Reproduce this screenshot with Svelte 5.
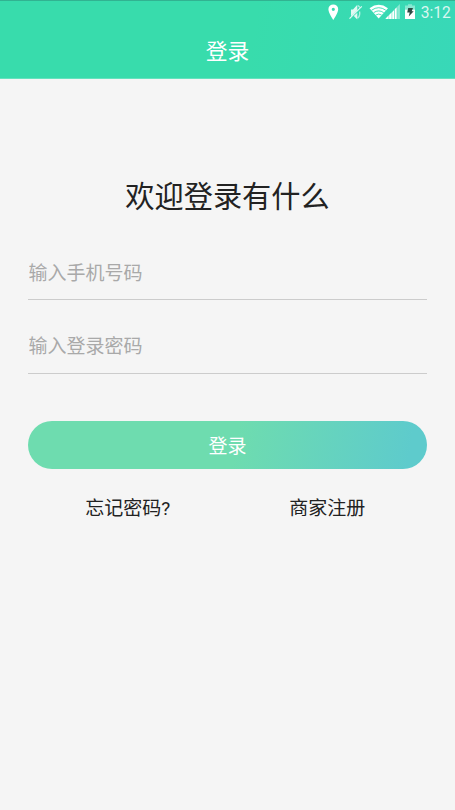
<script lang="ts">
  let phone = $state('');
  let password = $state('');
</script>

<div class="page">
  <header>
    <div class="status">
      <svg width="127" height="24" viewBox="328 0 127 24">
        <path fill="#fff" fill-rule="evenodd" d="M333.3 4.4a4.9 4.9 0 0 0-4.9 4.9c0 3.6 4.9 10.7 4.9 10.7s4.9-7.1 4.9-10.7a4.9 4.9 0 0 0-4.9-4.9zm0 3.3a1.6 1.6 0 1 1 0 3.2 1.6 1.6 0 0 1 0-3.2z" />
        <g opacity=".85">
          <path fill="#fff" d="M351 9.5h2l4.3-4.7v5.4L351 16.3zM353.8 16l3.5-3.2v6.8z" />
          <path fill="none" stroke="#fff" stroke-width="1.2" d="M349.5 18.7L361.8 6.4" />
          <path fill="none" stroke="#fff" stroke-width="1.4" opacity=".7" d="M357.8 5.7q1.7.8 2 2M359.6 11.5q.6 4.8-2 6.6" />
        </g>
        <path fill="#fff" d="M369.5 8.2Q378.7 1.5 388 8.2L378.7 18.6z" />
        <path fill="none" stroke="#38dcb0" stroke-width=".9" d="M371.6 10.2q7.1-5 14.2 0M373.7 12.6q5-3.4 10 0M375.8 15q2.9-1.9 5.8 0" />
        <path fill="#fff" d="M385.6 19v-.6l3.1-3.1V19zM389.1 19v-4.1l2.6-2.6V19zM392.2 19v-7.1l1.9-1.9v9zM394.7 19V9.3l2-2V19z" />
        <path fill="#fff" opacity=".42" d="M397.2 19V6.7l2.7-2.7v15z" />
        <path fill="#fff" opacity=".4" d="M405 5.6h3V4.2h4v1.4h3v4.4h-10z" />
        <path fill="#fff" d="M405 9.7h10V19h-10z" />
        <path fill="#2c4942" d="M408.2 8h4.8l-1.3 3.2h2l-5 5.4 1-4h-2.5z" />
        <text x="420.8" y="18">3:12</text>
      </svg>
    </div>
    <div class="title">登录</div>
  </header>
  <main>
    <h1>欢迎登录有什么</h1>
    <form onsubmit={(e) => e.preventDefault()}>
      <input type="tel" placeholder="输入手机号码" bind:value={phone} />
      <input class="password" type="password" placeholder="输入登录密码" bind:value={password} />
      <button type="submit">登录</button>
    </form>
    <nav>
      <span>忘记密码<span class="mark">?</span></span>
      <span>商家注册</span>
    </nav>
  </main>
</div>

<style>
  :global(body) {
    background: #f5f5f5;
  }
  .page {
    min-height: 810px;
    background: #f5f5f5;
    color: #222;
    font-family: "Noto Sans CJK SC", sans-serif;
  }
  header {
    box-sizing: border-box;
    height: 79px;
    border-top: 1px solid #31b391;
    border-bottom: 1px solid #65e2be;
    background: linear-gradient(100deg, #38dcac 55%, #38d8b8);
    color: #fff;
  }
  .status {
    display: flex;
    justify-content: flex-end;
    height: 24px;
    margin-top: -1px;
  }
  .status text {
    fill: #fff;
    fill-opacity: .82;
    font: 15.6px Roboto, sans-serif;
  }
  .title {
    font-size: 21.8px;
    line-height: 52px;
    text-align: center;
  }
  main {
    padding: 93px 28px 0;
  }
  h1 {
    margin: 0;
    font-size: 29.2px;
    font-weight: 400;
    line-height: 44px;
    text-align: center;
  }
  form {
    display: flex;
    flex-direction: column;
    padding-top: 29px;
  }
  input {
    box-sizing: border-box;
    width: 100%;
    height: 55px;
    margin-bottom: 19px;
    padding: 0 0 2px .5px;
    border: 0;
    border-bottom: 1px solid #ccc;
    border-radius: 0;
    outline: 0;
    background: none;
    color: #222;
    font: 19px "Noto Sans CJK SC", sans-serif;
  }
  .password {
    padding-bottom: 4px;
  }
  input::placeholder {
    color: #a9a9a9;
    opacity: 1;
  }
  button {
    height: 48px;
    margin-top: 28px;
    padding: 0 0 2px;
    border: 0;
    border-radius: 24px;
    background: linear-gradient(100deg, #6edcaf 52%, #5ecbcc 95%);
    color: #fff;
    font: 19px "Noto Sans CJK SC", sans-serif;
  }
  nav {
    display: grid;
    grid-template-columns: 1fr 1fr;
    padding-top: 24px;
    font-size: 19px;
    line-height: 28px;
    text-align: center;
  }
  .mark {
    font-family: Roboto, sans-serif;
  }
</style>
